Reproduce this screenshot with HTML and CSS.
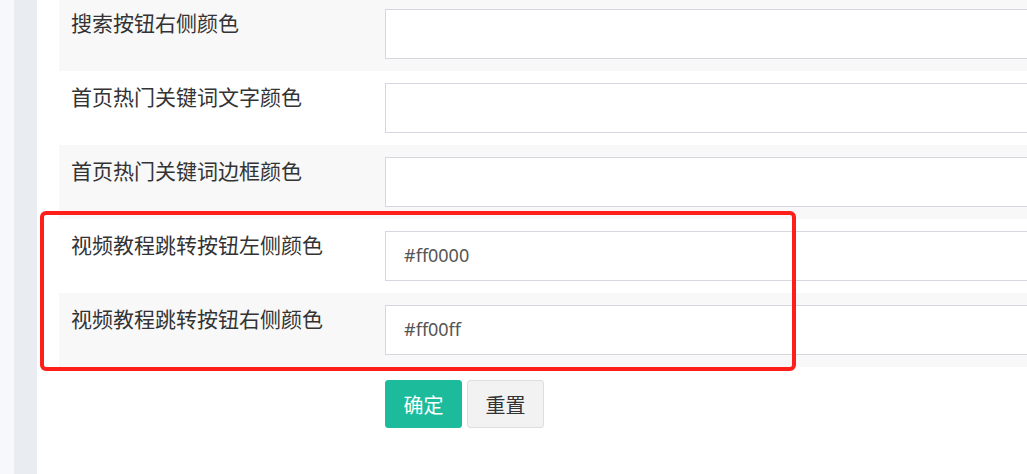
FILE: index.html
```html
<!DOCTYPE html>
<html lang="zh-CN">
<head>
<meta charset="utf-8">
<title>颜色设置</title>
<link rel="stylesheet" href="styles.css">
</head>
<body>
<div class="page">
  <div class="rail"></div>
  <div class="rail-dark"></div>
  <div class="main">
    <form class="form">
      <div class="row odd">
        <label class="label">搜索按钮右侧颜色</label>
        <div class="field"><input class="input" type="text" value=""></div>
      </div>
      <div class="row">
        <label class="label">首页热门关键词文字颜色</label>
        <div class="field"><input class="input" type="text" value=""></div>
      </div>
      <div class="row odd">
        <label class="label">首页热门关键词边框颜色</label>
        <div class="field"><input class="input" type="text" value=""></div>
      </div>
      <div class="row">
        <label class="label">视频教程跳转按钮左侧颜色</label>
        <div class="field"><input class="input" type="text" value="#ff0000"></div>
      </div>
      <div class="row odd">
        <label class="label">视频教程跳转按钮右侧颜色</label>
        <div class="field"><input class="input" type="text" value="#ff00ff"></div>
      </div>
      <div class="actions">
        <button type="button" class="btn btn-primary">确定</button>
        <button type="button" class="btn btn-default">重置</button>
      </div>
      <div class="highlight"></div>
    </form>
  </div>
</div>
</body>
</html>
```

FILE: styles.css
```css
html, body {
  margin: 0;
  padding: 0;
  background: #ffffff;
  overflow: hidden;
}
body {
  font-family: "Noto Sans CJK SC", "Noto Sans", sans-serif;
  color: #333333;
}
.page {
  display: flex;
  height: 474px;
  overflow: hidden;
}
.rail {
  width: 14px;
  flex: none;
  background: #f6f8fa;
}
.rail-dark {
  width: 23px;
  flex: none;
  background: #e9edf1;
}
.main {
  flex: 1;
  padding-left: 22px;
  overflow: hidden;
  background: #ffffff;
}
.form {
  position: relative;
  width: 1100px;
  margin-top: -3px;
}
.row {
  display: grid;
  grid-template-columns: 326px 1fr;
  padding: 12px 0;
  background: #ffffff;
}
.row.odd {
  background: #f8f8f8;
}
.label {
  padding-left: 12px;
  font-size: 21px;
  line-height: 26px;
  color: #333333;
}
.field {
  display: flex;
}
.input {
  flex: 1;
  box-sizing: border-box;
  height: 50px;
  margin: 0;
  border: 1px solid #d5d6de;
  border-radius: 0;
  background: #ffffff;
  padding: 0 18px 3px;
  font-family: "Noto Sans", "Liberation Sans", sans-serif;
  font-size: 18px;
  color: #555555;
  outline: none;
}
.actions {
  display: flex;
  gap: 5px;
  padding-left: 326px;
  margin-top: 13px;
}
.btn {
  box-sizing: border-box;
  height: 48px;
  width: 77px;
  border-radius: 3px;
  font-family: "Noto Sans CJK SC", sans-serif;
  font-size: 20px;
  padding: 0;
  cursor: pointer;
}
.btn-primary {
  background: #1bbb9b;
  border: 1px solid #1bbb9b;
  color: #ffffff;
}
.btn-default {
  background: #f2f2f2;
  border: 1px solid #dedede;
  color: #333333;
}
.highlight {
  position: absolute;
  left: -19px;
  top: 214px;
  width: 756px;
  height: 160px;
  box-sizing: border-box;
  border: 4px solid #ff1f1a;
  border-radius: 6px;
  pointer-events: none;
}
```
